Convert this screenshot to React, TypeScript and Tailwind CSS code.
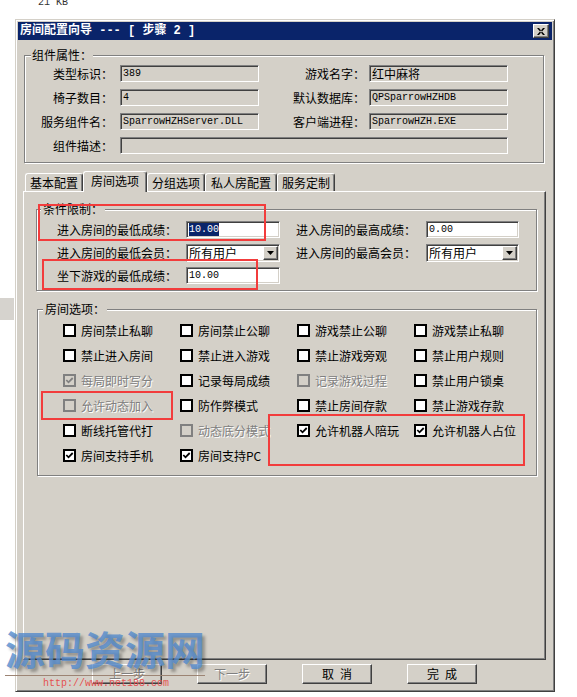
import React from 'react';

const cjk = "[font-family:'Noto_Sans_CJK_SC','Liberation_Sans',sans-serif]";
const mono = "[font-family:'Liberation_Mono','Noto_Sans_CJK_SC',monospace]";
const sunken =
  'border border-t-[#808080] border-l-[#808080] border-b-white border-r-white shadow-[inset_1px_1px_0_#404040,inset_-1px_-1px_0_#d4d0c8]';
const raised =
  'border border-t-white border-l-white border-b-[#404040] border-r-[#404040] shadow-[inset_-1px_-1px_0_#808080]';
const etched = 'border border-[#808080] shadow-[1px_1px_0_#fff,inset_1px_1px_0_#fff]';
const embossed = 'text-[#808080] [text-shadow:1px_1px_0_#fff]';

function Box({ className, white, children }: { className: string; white?: boolean; children?: React.ReactNode }) {
  return (
    <div className={`${sunken} h-[17px] flex items-center pl-[2px] overflow-hidden ${white ? 'bg-white' : 'bg-[#d4d0c8]'} ${className}`}>
      {children}
    </div>
  );
}

function Combo({ value, className }: { value: string; className: string }) {
  return (
    <div className={`${sunken} bg-white h-[18px] flex items-center ${className}`}>
      <span className="flex-1 pl-[2px] text-[12px] leading-[12px]">{value}</span>
      <div className={`${raised} bg-[#d4d0c8] w-[15px] h-[14px] mr-[1px] flex items-center justify-center`}>
        <svg width="7" height="4" viewBox="0 0 7 4">
          <path d="M0 0h7L3.5 4z" fill="#000" />
        </svg>
      </div>
    </div>
  );
}

function Check({ label, checked, disabled }: { label: string; checked?: boolean; disabled?: boolean }) {
  return (
    <div className="flex items-center h-[25px]">
      <div
        className={`w-[13px] h-[13px] border-2 flex items-center justify-center ${
          disabled ? 'border-[#808080] bg-[#d4d0c8]' : 'border-black bg-white'
        }`}
      >
        {checked && (
          <svg width="9" height="9" viewBox="0 0 9 9">
            <path d="M1.3 4 L3.5 6.3 L7.7 2" fill="none" stroke={disabled ? '#808080' : '#000'} strokeWidth="1.8" />
          </svg>
        )}
      </div>
      <span className={`ml-[5px] text-[12px] leading-[14px] whitespace-nowrap ${disabled ? embossed : 'text-black'}`}>{label}</span>
    </div>
  );
}

type Opt = { label: string; checked?: boolean; disabled?: boolean };

const options: Opt[] = [
  { label: '房间禁止私聊' },
  { label: '房间禁止公聊' },
  { label: '游戏禁止公聊' },
  { label: '游戏禁止私聊' },
  { label: '禁止进入房间' },
  { label: '禁止进入游戏' },
  { label: '禁止游戏旁观' },
  { label: '禁止用户规则' },
  { label: '每局即时写分', checked: true, disabled: true },
  { label: '记录每局成绩' },
  { label: '记录游戏过程', disabled: true },
  { label: '禁止用户锁桌' },
  { label: '允许动态加入', disabled: true },
  { label: '防作弊模式' },
  { label: '禁止房间存款' },
  { label: '禁止游戏存款' },
  { label: '断线托管代打' },
  { label: '动态底分模式', disabled: true },
  { label: '允许机器人陪玩', checked: true },
  { label: '允许机器人占位', checked: true },
  { label: '房间支持手机', checked: true },
  { label: '房间支持PC', checked: true },
];

const tabs = [
  { label: '基本配置', w: 'w-[58px]' },
  { label: '房间选项', w: 'w-[64px]', active: true },
  { label: '分组选项', w: 'w-[58px]' },
  { label: '私人房配置', w: 'w-[72px]' },
  { label: '服务定制', w: 'w-[58px]' },
];

function Button({ children, disabled }: { children: React.ReactNode; disabled?: boolean }) {
  return (
    <div
      className={`${raised} bg-[#d4d0c8] w-[70px] h-[20px] flex items-center justify-center gap-[6px] text-[12px] leading-[12px] ${
        disabled ? embossed : 'text-black'
      }`}
    >
      {children}
    </div>
  );
}

export default function App() {
  return (
    <div className={`relative w-[577px] h-[697px] overflow-hidden bg-white text-black ${cjk}`}>
      {/* file size caption, cut at the top */}
      <div className="flex h-[19px] pl-[38px]">
        <div className={`-mt-[2px] text-[10px] leading-[10px] text-[#333] ${mono}`}>21 KB</div>
      </div>

      <div className="flex h-[673px]">
        <div className="w-[14px] mr-[1px]">
          <div className="mt-[279px] h-[22px] bg-[#d6d3ce]" />
        </div>

        {/* Window */}
        <div className="w-[540px] h-[673px] bg-[#d4d0c8] border border-t-[#d4d0c8] border-l-[#d4d0c8] border-b-[#404040] border-r-[#404040] shadow-[inset_1px_1px_0_#fff,inset_-1px_-1px_0_#808080] p-[2px]">
          <div className="h-[18px] bg-[#0a246a] flex items-center justify-between pl-[2px] pr-[3px]">
            <span className={`text-white font-bold text-[12px] leading-[12px] whitespace-pre ${mono}`}>房间配置向导 --- [ 步骤 2 ]</span>
            <div className={`${raised} bg-[#d4d0c8] w-[16px] h-[14px] flex items-center justify-center`}>
              <svg width="8" height="7" viewBox="0 0 8 7">
                <path d="M0 0h2l6 7h-2zM8 0h-2l-6 7h2z" fill="#000" />
              </svg>
            </div>
          </div>

          <div className="pl-[5px]">
            {/* 组件属性 */}
            <fieldset className={`${etched} mt-[8px] ml-[1px] w-[520px]`}>
              <legend className="ml-[6px] px-[1px] bg-[#d4d0c8] text-[12px] leading-[14px]">组件属性：</legend>
              <div className="pt-[3px] pb-[8px] flex flex-col gap-[7px] text-[12px] leading-[12px]">
                <div className="flex items-center">
                  <span className="w-[88px] text-right">类型标识：</span>
                  <Box className="ml-[7px] w-[139px]">
                    <span className={`text-[10px] ${mono}`}>389</span>
                  </Box>
                  <span className="w-[106px] text-right">游戏名字：</span>
                  <Box className="ml-[4px] w-[139px]">红中麻将</Box>
                </div>
                <div className="flex items-center">
                  <span className="w-[88px] text-right">椅子数目：</span>
                  <Box className="ml-[7px] w-[139px]">
                    <span className={`text-[10px] ${mono}`}>4</span>
                  </Box>
                  <span className="w-[106px] text-right">默认数据库：</span>
                  <Box className="ml-[4px] w-[139px]">
                    <span className={`text-[10px] ${mono}`}>QPSparrowHZHDB</span>
                  </Box>
                </div>
                <div className="flex items-center">
                  <span className="w-[88px] text-right">服务组件名：</span>
                  <Box className="ml-[7px] w-[139px]">
                    <span className={`text-[10px] ${mono}`}>SparrowHZHServer.DLL</span>
                  </Box>
                  <span className="w-[106px] text-right">客户端进程：</span>
                  <Box className="ml-[4px] w-[139px]">
                    <span className={`text-[10px] ${mono}`}>SparrowHZH.EXE</span>
                  </Box>
                </div>
                <div className="flex items-center">
                  <span className="w-[88px] text-right">组件描述：</span>
                  <Box className="ml-[7px] w-[388px]" />
                </div>
              </div>
            </fieldset>

            {/* Tabs */}
            <div className="mt-[8px] ml-[2px] h-[20px] flex items-end text-[12px] leading-[12px]">
              {tabs.map((t) =>
                t.active ? (
                  <div
                    key={t.label}
                    className={`${t.w} relative z-10 -mb-px h-[21px] bg-[#d4d0c8] border-t border-l border-r border-t-white border-l-white border-r-[#404040] rounded-t-[3px] shadow-[inset_-1px_0_0_#808080] flex items-center justify-center pb-[2px]`}
                  >
                    {t.label}
                  </div>
                ) : (
                  <div
                    key={t.label}
                    className={`${t.w} h-[18px] border-t border-l border-r border-t-white border-l-white border-r-[#404040] rounded-t-[3px] shadow-[inset_-1px_0_0_#808080] flex items-center justify-center`}
                  >
                    {t.label}
                  </div>
                )
              )}
            </div>

            {/* Tab panel */}
            <div className="w-[523px] h-[469px] border border-t-white border-l-white border-b-[#404040] border-r-[#404040] shadow-[inset_-1px_-1px_0_#808080]">
              <fieldset className={`${etched} mt-[10px] ml-[12px] w-[501px]`}>
                <legend className="ml-[4px] px-[2px] bg-[#d4d0c8] text-[12px] leading-[14px]">条件限制：</legend>
                <div className="pt-[5px] pb-[6px] pl-[20px] flex flex-col gap-[6px] text-[12px] leading-[12px]">
                  <div className="flex items-center h-[17px]">
                    <span className="w-[120px] whitespace-nowrap">进入房间的最低成绩：</span>
                    <Box white className="ml-[9px] w-[94px]">
                      <span className={`text-[10px] leading-[13px] bg-[#0a246a] text-white ${mono}`}>10.00</span>
                    </Box>
                    <span className="ml-[16px] w-[120px] whitespace-nowrap">进入房间的最高成绩：</span>
                    <Box white className="ml-[10px] w-[93px]">
                      <span className={`text-[10px] ${mono}`}>0.00</span>
                    </Box>
                  </div>
                  <div className="flex items-center h-[17px]">
                    <span className="w-[120px] whitespace-nowrap">进入房间的最低会员：</span>
                    <Combo value="所有用户" className="ml-[9px] w-[94px]" />
                    <span className="ml-[16px] w-[120px] whitespace-nowrap">进入房间的最高会员：</span>
                    <Combo value="所有用户" className="ml-[10px] w-[93px]" />
                  </div>
                  <div className="flex items-center h-[17px]">
                    <span className="w-[120px] whitespace-nowrap">坐下游戏的最低成绩：</span>
                    <Box white className="ml-[9px] w-[94px]">
                      <span className={`text-[10px] ${mono}`}>10.00</span>
                    </Box>
                  </div>
                </div>
              </fieldset>

              <fieldset className={`${etched} mt-[11px] ml-[13px] w-[500px]`}>
                <legend className="ml-[5px] px-[2px] bg-[#d4d0c8] text-[12px] leading-[14px]">房间选项：</legend>
                <div className="pt-[2px] pb-[7px] pl-[25px] grid grid-cols-[117px_117px_117px_117px]">
                  {options.map((o) => (
                    <Check key={o.label} label={o.label} checked={o.checked} disabled={o.disabled} />
                  ))}
                </div>
              </fieldset>
            </div>

            {/* Buttons */}
            <div className="mt-[4px] ml-[69px] flex gap-[35px]">
              <Button disabled>上一步</Button>
              <Button disabled>下一步</Button>
              <Button>
                <span>取</span>
                <span>消</span>
              </Button>
              <Button>
                <span>完</span>
                <span>成</span>
              </Button>
            </div>
          </div>
        </div>
      </div>

      {/* annotation rectangles */}
      <div className="absolute left-[38px] top-[204px] w-[228px] h-[37px] border-2 border-[#f23c3c]" />
      <div className="absolute left-[42px] top-[259px] w-[216px] h-[31px] border-2 border-[#f23c3c]" />
      <div className="absolute left-[41px] top-[391px] w-[132px] h-[29px] border-2 border-[#f23c3c]" />
      <div className="absolute left-[268px] top-[414px] w-[257px] h-[52px] border-2 border-[#f23c3c]" />

      {/* watermark */}
      <div className="absolute left-[5px] top-[628px] text-[40px] leading-[40px] font-bold text-[#5289cc]/80 [text-shadow:3px_3px_3px_rgba(0,0,0,0.3)] whitespace-nowrap">
        源码资源网
      </div>
      <div className="absolute left-[5px] top-[675px] w-[200px] h-px bg-[#9c8474]" />
      <div className={`absolute left-[43px] top-[678px] text-[10px] leading-[12px] text-[#e45050] ${mono}`}>http://www.net188.com</div>
    </div>
  );
}
